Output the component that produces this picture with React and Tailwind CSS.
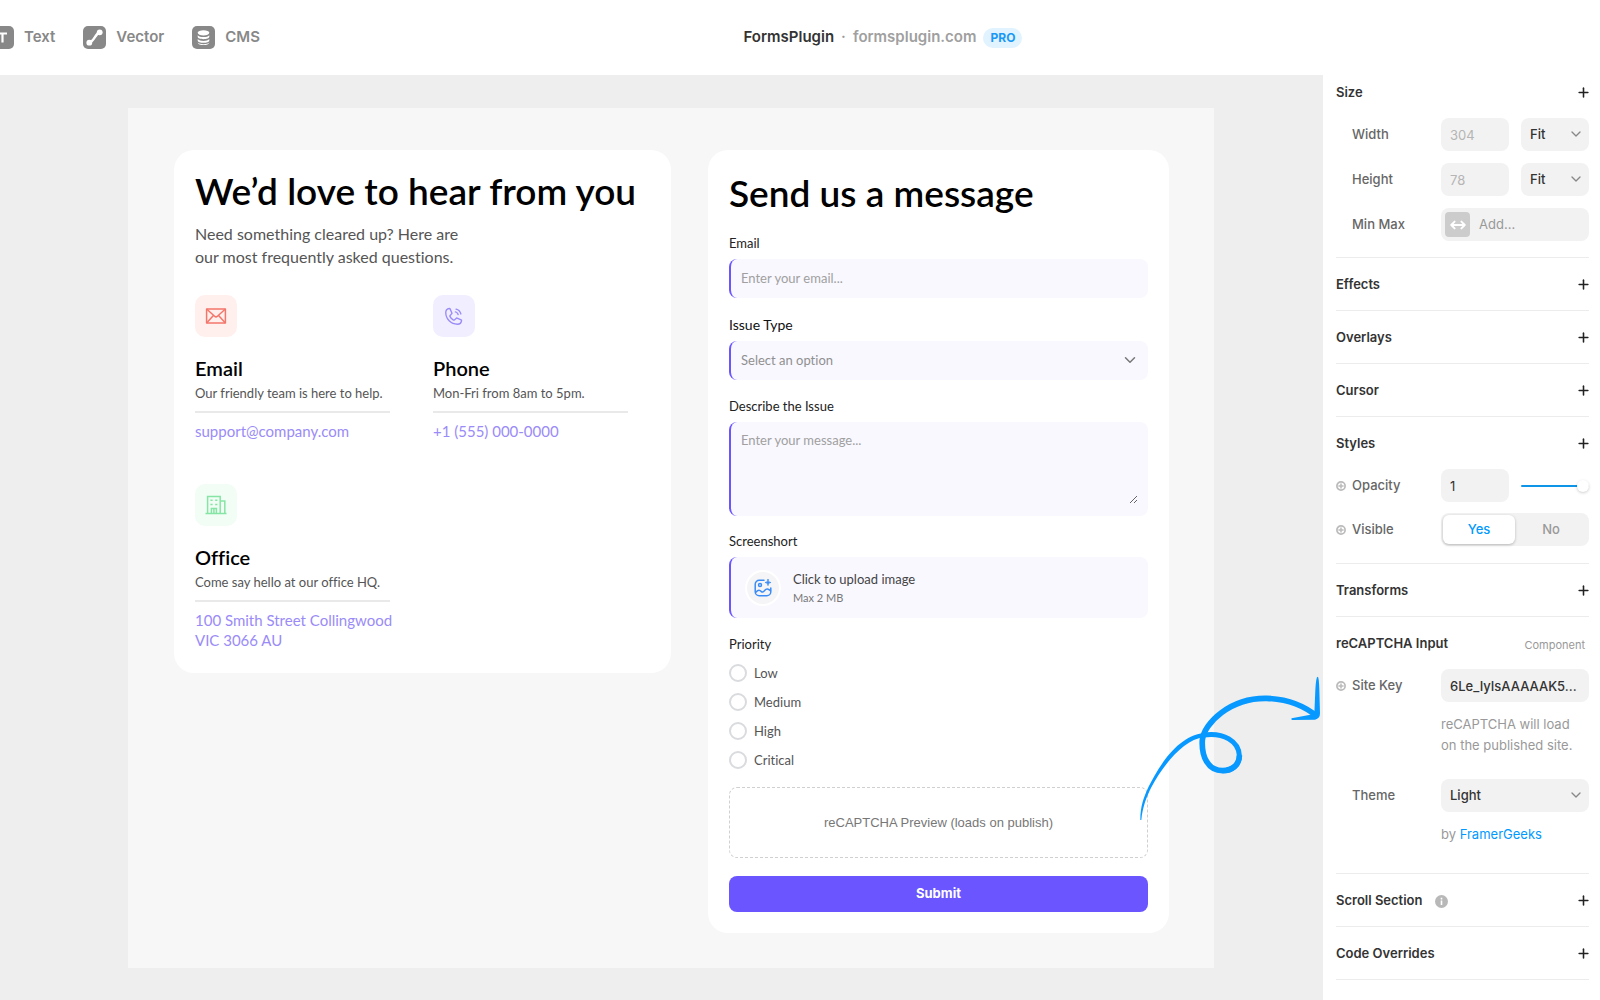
import { useState } from 'react';
import { ChevronDown, Plus } from 'lucide-react';
import { PiPhoneCall } from 'react-icons/pi';

const inputBox = 'rounded-lg border-l-2 border-[#6a55ff] bg-[#f9f8ff]';
const panelBox = 'h-[33px] rounded-lg bg-[#f2f2f2]';

function TextIcon() {
  return (
    <svg width="23" height="23" viewBox="0 0 23 23">
      <rect width="23" height="23" rx="5" fill="#888" />
      <path d="M7 7.5h9M11.5 7.5v9" stroke="#fff" strokeWidth="2.2" />
    </svg>
  );
}

function VectorIcon() {
  return (
    <svg width="23" height="23" viewBox="0 0 23 23">
      <rect width="23" height="23" rx="5" fill="#888" />
      <path d="M6.5 16.5C11 15.5 12 8 16.5 6.5" stroke="#fff" strokeWidth="2.4" fill="none" />
      <circle cx="6.3" cy="16.7" r="2.9" fill="#fff" />
      <circle cx="16.7" cy="6.3" r="2.9" fill="#fff" />
    </svg>
  );
}

function CmsIcon() {
  return (
    <svg width="23" height="23" viewBox="0 0 23 23">
      <rect width="23" height="23" rx="5" fill="#888" />
      <ellipse cx="11.5" cy="6.8" rx="5.8" ry="2.6" fill="#fff" />
      <path
        d="M5.7 9.2c1.6 2.5 10 2.5 11.6 0v1.6c0 3.2-11.6 3.2-11.6 0zM5.7 13c1.6 2.5 10 2.5 11.6 0v1.4c0 3.2-11.6 3.2-11.6 0zM5.7 16.4c1.6 2.3 10 2.3 11.6 0 0 3.4-11.6 3.4-11.6 0z"
        fill="#fff"
      />
    </svg>
  );
}

function MailIcon() {
  return (
    <svg width="22" height="22" viewBox="0 0 22 22" fill="none" stroke="#f4766b" strokeWidth="1.5" strokeLinejoin="round">
      <rect x="1.6" y="4" width="18.8" height="14" />
      <path d="M1.6 4l8 7.2a2 2 0 0 0 2.8 0l8-7.2M1.6 18l6.8-7.6M20.4 18l-6.8-7.6" />
    </svg>
  );
}

function OfficeIcon() {
  return (
    <svg width="24" height="24" viewBox="0 0 24 24" fill="none" stroke="#86e5a4" strokeWidth="1.5">
      <path d="M1.5 20.5h21M3.6 20.5V3.6h12.6v16.9M16.2 8h4.6v12.5M7.4 20.5v-5h5v5M9.9 15.5v5" />
      <path d="M6.4 7.2h2.2M11.2 7.2h2.2M6.4 11.4h2.2M11.2 11.4h2.2" />
    </svg>
  );
}

function UploadIcon() {
  return (
    <svg width="18" height="18" viewBox="0 0 18 18" fill="none" stroke="#3b8cf5" strokeWidth="1.5" strokeLinecap="round">
      <path d="M10 1.3H5.2a4 4 0 0 0-4 4v7.4a4 4 0 0 0 4 4h7.6a4 4 0 0 0 4-4V9" />
      <circle cx="6" cy="6" r="1.5" />
      <path d="M14 .4c.3 2 .9 2.7 2.9 3.1-2 .4-2.6 1.1-2.9 3.1-.3-2-.9-2.7-2.9-3.1 2-.4 2.6-1.1 2.9-3.1z" fill="#3b8cf5" strokeWidth=".8" />
      <path d="M1.8 13.4c2.6-3.2 4-2.4 5.6-.8 1.2 1.2 2.2 0 3.2-1.2 1.8-2.2 3.6-1.8 5.8.2" />
    </svg>
  );
}

function MinMaxIcon() {
  return (
    <svg width="16" height="10" viewBox="0 0 16 10" fill="none" stroke="#fff" strokeWidth="1.9" strokeLinecap="round" strokeLinejoin="round">
      <path d="M1.2 5h13.6M4.6 1.6L1.2 5l3.4 3.4M11.4 1.6L14.8 5l-3.4 3.4" />
    </svg>
  );
}

function VariableDot() {
  return (
    <svg width="10" height="10" viewBox="0 0 10 10" fill="none" stroke="#bbb" strokeWidth="1.7">
      <circle cx="5" cy="5" r="4.1" />
      <path d="M5 2.4v5.2M2.4 5h5.2" strokeWidth="1.5" />
    </svg>
  );
}

function InfoIcon() {
  return (
    <svg width="13" height="13" viewBox="0 0 13 13">
      <circle cx="6.5" cy="6.5" r="6.5" fill="#b8b8b8" />
      <path d="M6.5 5.6v4.4M6.5 2.8v1.7" stroke="#fff" strokeWidth="1.6" />
    </svg>
  );
}

function Swirl() {
  return (
    <svg
      className="pointer-events-none absolute top-[585px] right-0"
      width="203"
      height="180"
      viewBox="0 0 609 540"
      fill="none"
      stroke="#0799ff"
      strokeLinejoin="round"
      aria-hidden="true"
    >
      <path
        d="M61 480C61 440 71 412 85 382C112 328 168 228 252 219L252 231C188 240 128 318 94 382C80 410 68 440 64 480Z"
        fill="#0799ff"
        stroke="none"
      />
      <path d="M250 225C312 216 356 244 358 286C358 318 334 332 308 332" strokeWidth="15" />
      <path d="M358 286C359 314 336 332 308 332C264 332 244 290 247 240C252 190 330 113 440 115C500 117 552 136 592 170" strokeWidth="17" />
      <path d="M593 50Q588 50 586 90L583 162L515 175Q511 178 517 180L585 179Q600 176 600 160L598 90Q597 50 593 50Z" fill="#0799ff" stroke="none" />
    </svg>
  );
}

function Tool({ icon, label }) {
  return (
    <button className="flex items-center gap-[10px] text-[15px] font-semibold text-[#888]">
      {icon}
      {label}
    </button>
  );
}

function Header() {
  return (
    <header className="flex h-[75px] shrink-0 items-center overflow-hidden bg-white">
      <nav className="-ml-[9px] flex shrink-0 items-center gap-7">
        <Tool icon={<TextIcon />} label="Text" />
        <Tool icon={<VectorIcon />} label="Vector" />
        <Tool icon={<CmsIcon />} label="CMS" />
      </nav>
      <div className="flex flex-1 items-center justify-center gap-[7px] pr-[94px] text-[15px] font-semibold">
        <span className="text-[#333]">FormsPlugin</span>
        <span className="text-[#999]">·</span>
        <span className="text-[#a0a0a0]">formsplugin.com</span>
        <span className="rounded-full bg-[#e0f3ff] px-[7px] text-xs leading-5 font-bold text-[#1a98f5]">PRO</span>
      </div>
    </header>
  );
}

function ContactItem({ icon, tint, title, text, href, children }) {
  return (
    <div>
      <div className={`flex size-[42px] items-center justify-center rounded-[10px] ${tint}`}>{icon}</div>
      <h2 className="mt-[19px] text-xl leading-6 font-semibold text-black">{title}</h2>
      <p className="mt-[3px] text-[13px] leading-5 text-[#555]">{text}</p>
      <a
        href={href}
        className="mt-2 block border-t-2 border-[#e9e9e9] pt-2 text-[15px] leading-5 whitespace-nowrap text-[#9a8bf8]"
      >
        {children}
      </a>
    </div>
  );
}

function ContactCard() {
  return (
    <section className="rounded-[20px] bg-white px-[21px] pt-[19px] pb-[23px]">
      <h1 className="text-[37px] leading-[44px] font-semibold text-black">We’d love to hear from you</h1>
      <p className="mt-[9px] text-base leading-[23px] text-[#555]">
        Need something cleared up? Here are
        <br />
        our most frequently asked questions.
      </p>
      <div className="mt-[27px] grid grid-cols-2 gap-x-[43px] gap-y-[43px] pr-[22px]">
        <ContactItem
          icon={<MailIcon />}
          tint="bg-[#fff0ee]"
          title="Email"
          text="Our friendly team is here to help."
          href="mailto:support@company.com"
        >
          support@company.com
        </ContactItem>
        <ContactItem
          icon={<PiPhoneCall size={22} color="#9a8bf8" />}
          tint="bg-[#f0eeff]"
          title="Phone"
          text="Mon-Fri from 8am to 5pm."
          href="tel:+15550000000"
        >
          +1 (555) 000-0000
        </ContactItem>
        <ContactItem
          icon={<OfficeIcon />}
          tint="bg-[#f1fdf5]"
          title="Office"
          text="Come say hello at our office HQ."
          href="#office"
        >
          100 Smith Street Collingwood
          <br />
          VIC 3066 AU
        </ContactItem>
      </div>
    </section>
  );
}

function MessageForm() {
  const [priority, setPriority] = useState('');

  return (
    <form className="rounded-[20px] bg-white px-[21px] pt-[21px] pb-[21px] text-[13px]" onSubmit={(e) => e.preventDefault()}>
      <h2 className="text-[37px] leading-[44px] font-semibold text-black">Send us a message</h2>

      <label htmlFor="email" className="mt-[18px] block leading-5 text-[#222]">
        Email
      </label>
      <input
        id="email"
        type="email"
        placeholder="Enter your email..."
        className={`mt-[6px] block h-[39px] w-full px-[10px] pb-[2px] placeholder:text-[#a0a0a0] focus:outline-none ${inputBox}`}
      />

      <label htmlFor="issue" className="mt-[17px] block text-sm leading-5 text-[#111]">
        Issue Type
      </label>
      <div className="relative mt-[6px]">
        <select id="issue" className={`block h-[39px] w-full appearance-none px-[10px] text-[#909090] focus:outline-none ${inputBox}`}>
          <option>Select an option</option>
        </select>
        <ChevronDown size={18} className="pointer-events-none absolute top-[10px] right-[9px] text-[#777]" />
      </div>

      <label htmlFor="message" className="mt-4 block leading-5 text-[#222]">
        Describe the Issue
      </label>
      <div className={`mt-[6px] px-[10px] pt-2 pb-3 ${inputBox}`}>
        <textarea
          id="message"
          placeholder="Enter your message..."
          className="block h-[74px] w-full resize-y leading-5 placeholder:text-[#a0a0a0] focus:outline-none"
        />
      </div>

      <p className="mt-[15px] leading-5 text-[#222]">Screenshort</p>
      <label className={`mt-[6px] flex h-[61px] cursor-pointer items-center gap-3 px-[14px] ${inputBox}`}>
        <input type="file" accept="image/*" className="sr-only" />
        <span className="flex size-9 items-center justify-center rounded-full border-2 border-white bg-[#f5f5f8]">
          <UploadIcon />
        </span>
        <span>
          <span className="block leading-5 text-[#444]">Click to upload image</span>
          <span className="block text-[11px] leading-[18px] text-[#777]">Max 2 MB</span>
        </span>
      </label>

      <fieldset className="mt-4">
        <legend className="leading-5 text-[#222]">Priority</legend>
        <div className="mt-[10px] flex flex-col gap-[11px]">
          {['Low', 'Medium', 'High', 'Critical'].map((level) => (
            <label key={level} className="flex items-center gap-[7px] leading-[18px] text-[#555]">
              <input
                type="radio"
                name="priority"
                value={level}
                checked={priority === level}
                onChange={() => setPriority(level)}
                className="size-[18px] appearance-none rounded-full border-2 border-[#d9dbde] bg-white checked:border-[5px] checked:border-[#6a55ff]"
              />
              {level}
            </label>
          ))}
        </div>
      </fieldset>

      <div className="mt-[18px] flex h-[71px] items-center justify-center rounded-lg border border-dashed border-[#d0d0d0] font-['Liberation_Sans',sans-serif] text-[#777]">
        reCAPTCHA Preview (loads on publish)
      </div>
      <button
        type="submit"
        className="mt-[18px] block h-9 w-full rounded-lg bg-[#6a55ff] font-['Inter',sans-serif] font-bold text-white"
      >
        Submit
      </button>
    </form>
  );
}

function Section({ title, note, info, children }) {
  return (
    <section className="border-b border-[#ececec]">
      <div className="flex h-[52px] items-center justify-between">
        <h3 className="flex items-center gap-[13px] pt-[2px] font-semibold text-[#333]">
          {title}
          {info && <InfoIcon />}
        </h3>
        {note ? (
          <span className="pt-1 pr-1 text-[11px] text-[#999]">{note}</span>
        ) : (
          <button aria-label={`Add ${title}`} className="-mr-[2px] text-[#222]">
            <Plus size={15} strokeWidth={2.5} />
          </button>
        )}
      </div>
      {children}
    </section>
  );
}

function Row({ label, htmlFor, variable, children }) {
  return (
    <div className="flex items-center">
      <span className="w-4 shrink-0">{variable && <VariableDot />}</span>
      <label htmlFor={htmlFor} className="w-[89px] shrink-0 font-medium text-[#666]">
        {label}
      </label>
      <div className="grid min-w-0 flex-1 auto-cols-fr grid-flow-col items-center gap-3">{children}</div>
    </div>
  );
}

function PanelSelect({ id, label, value }) {
  return (
    <div className="relative">
      <select
        id={id}
        aria-label={label}
        className={`block w-full appearance-none px-[9px] font-medium text-[#333] focus:outline-none ${panelBox}`}
      >
        <option>{value}</option>
      </select>
      <ChevronDown size={16} className="pointer-events-none absolute top-2 right-[5px] text-[#888]" />
    </div>
  );
}

function Sidebar() {
  const [visible, setVisible] = useState(true);
  const [opacity, setOpacity] = useState(1);

  return (
    <aside className="w-[277px] shrink-0 bg-white pr-[11px] pl-[13px] text-[13px]">
      <div className="-mt-[9px]">
        <Section title="Size">
          <div className="flex flex-col gap-3 pb-4">
            <Row label="Width" htmlFor="width">
              <input id="width" defaultValue="304" className={`w-full px-[9px] text-[#b5b5b5] ${panelBox}`} />
              <PanelSelect label="Width mode" value="Fit" />
            </Row>
            <Row label="Height" htmlFor="height">
              <input id="height" defaultValue="78" className={`w-full px-[9px] text-[#b5b5b5] ${panelBox}`} />
              <PanelSelect label="Height mode" value="Fit" />
            </Row>
            <Row label="Min Max" htmlFor="minmax">
              <button id="minmax" className={`flex w-full items-center gap-[9px] px-1 text-[#999] ${panelBox}`}>
                <span className="flex size-[25px] items-center justify-center rounded bg-[#ccc]">
                  <MinMaxIcon />
                </span>
                Add...
              </button>
            </Row>
          </div>
        </Section>
      </div>
      <Section title="Effects" />
      <Section title="Overlays" />
      <Section title="Cursor" />
      <Section title="Styles">
        <div className="flex flex-col gap-[11px] pb-[17px]">
          <Row label="Opacity" htmlFor="opacity" variable>
            <input
              id="opacity"
              value={opacity}
              onChange={(e) => setOpacity(e.target.value)}
              className={`w-full px-[9px] text-[#333] ${panelBox}`}
            />
            <input
              type="range"
              aria-label="Opacity"
              min="0"
              max="1"
              step="0.01"
              value={opacity}
              onChange={(e) => setOpacity(e.target.value)}
              className="w-full appearance-none bg-transparent [&::-webkit-slider-runnable-track]:h-[2px] [&::-webkit-slider-runnable-track]:rounded-full [&::-webkit-slider-runnable-track]:bg-[#0f95e8] [&::-webkit-slider-thumb]:-mt-[5px] [&::-webkit-slider-thumb]:size-3 [&::-webkit-slider-thumb]:appearance-none [&::-webkit-slider-thumb]:rounded-full [&::-webkit-slider-thumb]:bg-white [&::-webkit-slider-thumb]:shadow-[0_1px_3px_rgba(0,0,0,0.2)]"
            />
          </Row>
          <Row label="Visible" htmlFor="visible-yes" variable>
            <div className={`flex w-full p-[2px] font-medium ${panelBox}`}>
              <button
                id="visible-yes"
                onClick={() => setVisible(true)}
                className={`flex-1 rounded-md ${visible ? 'bg-white text-[#09f] shadow-[0_1px_3px_rgba(0,0,0,0.25)]' : 'text-[#999]'}`}
              >
                Yes
              </button>
              <button
                onClick={() => setVisible(false)}
                className={`flex-1 rounded-md ${visible ? 'text-[#999]' : 'bg-white text-[#09f] shadow-[0_1px_3px_rgba(0,0,0,0.25)]'}`}
              >
                No
              </button>
            </div>
          </Row>
        </div>
      </Section>
      <Section title="Transforms" />
      <Section title="reCAPTCHA Input" note="Component">
        <Row label="Site Key" htmlFor="sitekey" variable>
          <input
            id="sitekey"
            defaultValue="6Le_IyIsAAAAAK5..."
            className={`w-full px-[9px] font-medium text-[#333] ${panelBox}`}
          />
        </Row>
        <p className="mt-3 ml-[105px] leading-[21px] text-[#999]">
          reCAPTCHA will load
          <br />
          on the published site.
        </p>
        <div className="mt-[23px]">
          <Row label="Theme" htmlFor="theme">
            <PanelSelect id="theme" value="Light" />
          </Row>
        </div>
        <p className="mt-3 ml-[105px] pb-7 leading-[21px] text-[#999]">
          by{' '}
          <a href="#framergeeks" className="text-[#09f]">
            FramerGeeks
          </a>
        </p>
      </Section>
      <Section title="Scroll Section" info />
      <Section title="Code Overrides" />
    </aside>
  );
}

export default function App() {
  return (
    <div className="flex min-h-screen flex-col bg-[#eee] font-['Inter',sans-serif]">
      <Header />
      <div className="flex flex-1">
        <main className="relative min-w-0 flex-1 pt-[33px] pr-[109px] pb-8 pl-32">
          <div className="grid min-h-full grid-cols-[497fr_461fr] items-start gap-[37px] bg-[#f7f7f7] pt-[42px] pr-[45px] pb-[34px] pl-[46px] font-['Lato',sans-serif] [font-variant-ligatures:none]">
            <ContactCard />
            <MessageForm />
          </div>
          <Swirl />
        </main>
        <Sidebar />
      </div>
    </div>
  );
}
